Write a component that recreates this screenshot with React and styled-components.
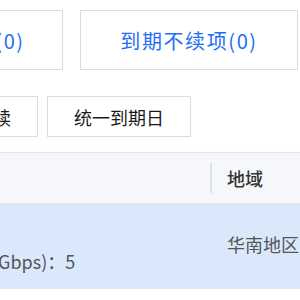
import React from "react";
import styled, { createGlobalStyle } from "styled-components";

const GlobalStyle = createGlobalStyle`
  html, body {
    margin: 0;
    padding: 0;
    background: #fff;
    overflow: hidden;
  }
  body {
    font-family: "Noto Sans CJK SC", "Noto Sans", "Liberation Sans", sans-serif;
  }
`;

const Page = styled.div`
  margin-left: -160px;
  width: 520px;
  padding-top: 10px;
`;

const Tabs = styled.div`
  display: flex;
  gap: 17px;
  padding-left: 5px;
`;

const Tab = styled.div`
  width: 218px;
  height: 60px;
  box-sizing: border-box;
  border: 1px solid #dcdcdc;
  display: flex;
  align-items: center;
  justify-content: center;
  padding-left: ${(p) => p.$shift || 0}px;
  font-size: 20px;
  letter-spacing: 1.6px;
  color: #1f6ef5;
  background: #fff;
`;

const Actions = styled.div`
  display: flex;
  gap: 9px;
  margin-top: 26px;
  padding-left: 36px;
`;

const Button = styled.button`
  height: 41px;
  box-sizing: border-box;
  padding: 0 26px;
  border: 1px solid #dcdcdc;
  background: #fff;
  font-family: inherit;
  font-size: 18px;
  color: #1a1a1a;
  display: flex;
  align-items: center;
`;

const Table = styled.div`
  margin-top: 15px;
  border-top: 1px solid #e3e6eb;
`;

const HeadRow = styled.div`
  display: grid;
  grid-template-columns: 370px 1fr;
  height: 50px;
  background: #f5f7fa;
  border-bottom: 1px solid #e3e6eb;
`;

const HeadCell = styled.div`
  position: relative;
  display: flex;
  align-items: center;
  padding-left: 17px;
  font-size: 18px;
  font-weight: 500;
  color: #333;
  &::before {
    content: ${(p) => (p.$divider ? '""' : "none")};
    position: absolute;
    left: 0;
    top: 10px;
    bottom: 10px;
    width: 2px;
    background: #dde0e5;
  }
`;

const BodyRow = styled.div`
  display: grid;
  grid-template-columns: 370px 1fr;
  height: 85px;
  background: #dae8fc;
`;

const Cell = styled.div`
  padding-left: ${(p) => p.$pl || 17}px;
  padding-top: ${(p) => p.$pt}px;
  font-size: 18px;
  color: #555;
  white-space: nowrap;
  line-height: 26px;
`;

export default function App() {
  return (
    <>
      <GlobalStyle />
      <Page>
        <Tabs>
          <Tab $shift={4}>自动续费项(0)</Tab>
          <Tab>到期不续项(0)</Tab>
        </Tabs>
        <Actions>
          <Button>设为到期不续</Button>
          <Button>统一到期日</Button>
        </Actions>
        <Table>
          <HeadRow>
            <HeadCell>配置</HeadCell>
            <HeadCell $divider>地域</HeadCell>
          </HeadRow>
          <BodyRow>
            <Cell $pt={44} $pl={80}>带宽上限(Gbps)：5</Cell>
            <Cell $pt={27}>华南地区</Cell>
          </BodyRow>
        </Table>
      </Page>
    </>
  );
}
